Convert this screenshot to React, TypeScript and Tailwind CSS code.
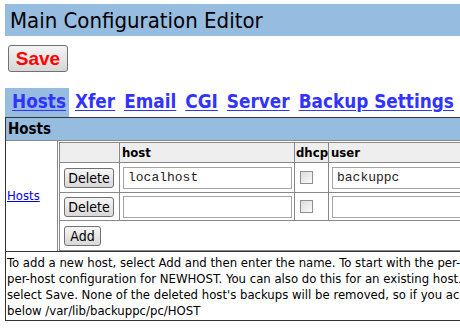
import React from "react";

const SANS = "font-['DejaVu_Sans_Condensed','Liberation_Sans',sans-serif]";

const tabs = ["Hosts", "Xfer", "Email", "CGI", "Server", "Backup Settings"];

function Btn({ label, w }: { label: string; w: string }) {
  return (
    <button
      className={`${w} flex h-[20px] items-center justify-center rounded-[3px] border border-[#707070] bg-gradient-to-b from-[#f6f6f6] to-[#d8d8d8] text-[14px] leading-none text-black`}
    >
      {label}
    </button>
  );
}

function Check() {
  return (
    <div className="ml-[5px] h-[13px] w-[13px] border border-[#8e8f8f] bg-gradient-to-br from-[#dcdcdc] to-[#fbfbfb]" />
  );
}

function Field({ value }: { value?: string }) {
  return (
    <div className="flex h-[22px] w-full items-center border border-[#a5a5a5] bg-white pl-[4px] font-['Liberation_Mono',monospace] text-[13px] text-[#2a2222]">
      {value}
    </div>
  );
}

export default function App() {
  return (
    <div className={`h-[330px] w-[460px] overflow-hidden bg-white text-black ${SANS}`}>
      <div className="ml-[5px] mt-[4px] flex h-[32px] w-[600px] items-center bg-[#96bde0] pl-[5px] text-[22px]">
        Main Configuration Editor
      </div>

      <div className="ml-[8px] mt-[9px]">
        <button className="h-[27px] w-[60px] rounded-[3px] border border-[#707070] bg-gradient-to-b from-[#f4f4f4] to-[#d6d6d6] font-['Liberation_Sans',sans-serif] text-[19px] font-bold leading-none text-[#ff0000]">
          Save
        </button>
      </div>

      <div className="ml-[5px] mt-[16px] flex h-[29px] items-center whitespace-nowrap text-[18.8px] font-bold">
        {tabs.map((t, i) => (
          <a
            key={t}
            className={`flex h-full items-center text-[#3333ff] underline underline-offset-[2px] ${
              i === 0 ? "bg-[#96bde0] pl-[7px] pr-[3px]" : "pl-[6px] pr-[3px]"
            }`}
          >
            {t}
          </a>
        ))}
      </div>

      <div className="ml-[5px] w-[730px] border border-[#333]">
        <div className="flex h-[23px] items-center border-b border-[#888] bg-[#96bde0] pl-[2px] text-[15px] font-bold">
          Hosts
        </div>
        <div className="flex border-b border-[#333]">
          <div className="flex w-[52px] shrink-0 items-center border-r border-[#888] pl-[1px] text-[13px]">
            <a className="text-[#0000ee] underline">Hosts</a>
          </div>
          <div className="shrink-0 pt-[1px] pl-[1px]">
            <table className="w-[670px] table-fixed border-collapse border border-[#444] text-[13px] leading-[16px]">
              <colgroup>
                <col className="w-[60px]" />
                <col className="w-[175px]" />
                <col className="w-[34px]" />
                <col />
              </colgroup>
              <tbody>
                <tr className="h-[20px] bg-[#eeeeee] font-bold">
                  <td className="border border-[#888]"></td>
                  <td className="border border-[#888] pl-[2px]">host</td>
                  <td className="border border-[#888] pl-[1px]">dhcp</td>
                  <td className="border border-[#888] pl-[2px]">user</td>
                </tr>
                {["localhost", ""].map((h, i) => (
                  <tr key={i} className={i === 0 ? "h-[30px]" : "h-[28px]"}>
                    <td className="border border-[#888] pl-[4px]">
                      <Btn label="Delete" w="w-[50px]" />
                    </td>
                    <td className="border border-[#888] pl-[3px] pr-[2px]">
                      <Field value={h} />
                    </td>
                    <td className="border border-[#888]">
                      <Check />
                    </td>
                    <td className="border border-[#888] pl-[3px]">
                      <Field value={i === 0 ? "backuppc" : ""} />
                    </td>
                  </tr>
                ))}
                <tr className="h-[30px]">
                  <td colSpan={4} className="border border-[#888] pl-[4px]">
                    <Btn label="Add" w="w-[37px]" />
                  </td>
                </tr>
              </tbody>
            </table>
          </div>
        </div>
        <div className="h-[68px] whitespace-nowrap px-[1px] pt-[3px] text-[13px] leading-[16px]">
          <div>To add a new host, select Add and then enter the name. To start with the per-host configuration from another host, enter the host name as NEWHOST=COPYHOST. This will overwrite any existing</div>
          <div>per-host configuration for NEWHOST. You can also do this for an existing host. To delete a host, hit the Delete button. For Add, Delete, and configuration copy, changes don't take effect until you</div>
          <div>select Save. None of the deleted host's backups will be removed, so if you accidently delete a host, simply re-add it. To completely remove a host's backups, you need to manually remove the files</div>
          <div>below /var/lib/backuppc/pc/HOST</div>
        </div>
      </div>
    </div>
  );
}
